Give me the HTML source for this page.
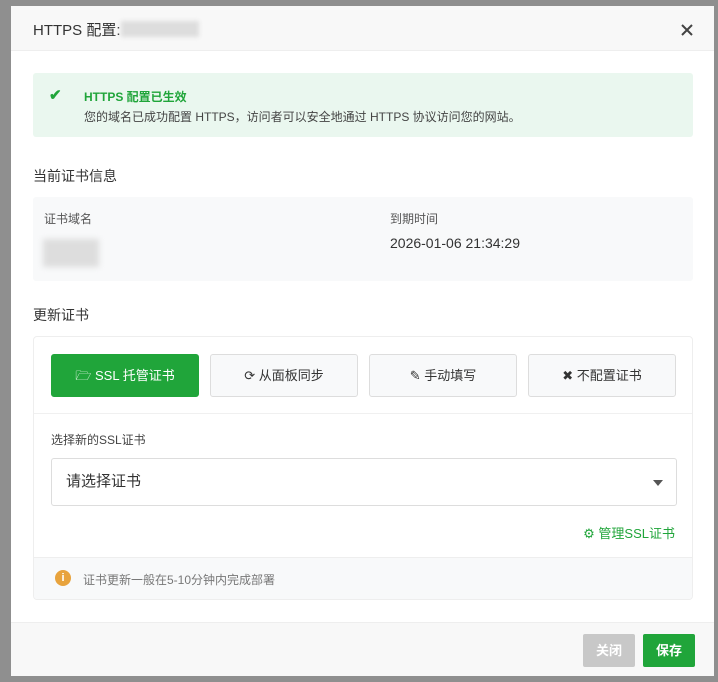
<!DOCTYPE html>
<html><head><meta charset="utf-8"><style>
*{box-sizing:border-box;margin:0;padding:0}
body{width:718px;height:682px;background:#8f8f8f;font-family:"Liberation Sans","Noto Sans CJK SC",sans-serif;position:relative;overflow:hidden;color:#333}
.modal{position:absolute;left:11px;top:6px;width:703px;height:670px;background:#fff;overflow:hidden}
.hd{height:45px;background:#f8f8f8;border-bottom:1px solid #eee;position:relative}
.hd .t{position:absolute;left:22px;top:13px;font-size:15px;color:#333}
.blur{display:inline-block;width:78px;height:16px;background:#ddd;vertical-align:-2px;filter:blur(2px)}
.hd svg{position:absolute;left:670px;top:18px}
.ok{position:absolute;left:22px;top:67px;width:660px;height:64px;background:#eaf7ef;border-radius:3px}
.ok .c{position:absolute;left:16px;top:13px;color:#20a53a;font-size:15px;font-weight:bold}
.ok .a{position:absolute;left:51px;top:15px;color:#20a53a;font-size:12px;font-weight:bold}
.ok .b{position:absolute;left:51px;top:35px;font-size:12px;color:#444}
.h2{position:absolute;left:22px;font-size:14px;color:#333}
.info{position:absolute;left:22px;top:191px;width:660px;height:84px;background:#f8f9fa;border-radius:3px}
.lbl{position:absolute;font-size:12px;color:#555}
.card{position:absolute;left:22px;top:330px;width:660px;height:264px;border:1px solid #eee;border-radius:4px;overflow:hidden}
.btn{position:absolute;top:17px;width:148px;height:43px;border:1px solid #ddd;background:#f8f9fa;border-radius:3px;font-size:13px;text-align:center;line-height:41px;color:#333}
.btn.g{background:#20a53a;border-color:#20a53a;color:#fff}
.sel{position:absolute;left:17px;top:121px;width:626px;height:48px;border:1px solid #ddd;border-radius:3px;font-size:15px;line-height:46px;padding-left:14px;color:#333}
.tri{position:absolute;right:13px;top:21px;border-left:5px solid transparent;border-right:5px solid transparent;border-top:6px solid #555}
.foot{position:absolute;left:0;bottom:0;width:100%;height:42px;background:#f8f9fa;border-top:1px solid #eee}
.mf{position:absolute;left:0;top:616px;width:703px;height:54px;background:#f8f8f8;border-top:1px solid #eee}
.b2{position:absolute;top:11px;height:33px;color:#fff;font-size:13px;font-weight:bold;text-align:center;line-height:33px;border-radius:2px}
</style></head><body>
<div class="modal">
<div class="hd"><div class="t">HTTPS 配置:<span class="blur"></span></div><svg width="12" height="12" viewBox="0 0 12 12"><path d="M1 1L11 11M11 1L1 11" stroke="#444" stroke-width="2"/></svg></div>
<div class="ok"><div class="c">✔</div><div class="a">HTTPS 配置已生效</div><div class="b">您的域名已成功配置 HTTPS，访问者可以安全地通过 HTTPS 协议访问您的网站。</div></div>
<div class="h2" style="top:160px">当前证书信息</div>
<div class="info">
<div class="lbl" style="left:11px;top:13px">证书域名</div>
<div style="position:absolute;left:10px;top:42px;width:56px;height:28px;background:#ddd;filter:blur(3px)"></div>
<div class="lbl" style="left:357px;top:13px">到期时间</div>
<div style="position:absolute;left:357px;top:38px;font-size:14px;color:#333">2026-01-06 21:34:29</div>
</div>
<div class="h2" style="top:299px">更新证书</div>
<div class="card">
<div class="btn g" style="left:17px">🗁 SSL 托管证书</div>
<div class="btn" style="left:176px">⟳ 从面板同步</div>
<div class="btn" style="left:335px">✎ 手动填写</div>
<div class="btn" style="left:494px">✖ 不配置证书</div>
<div style="position:absolute;left:0;top:76px;width:100%;border-top:1px solid #f0f0f0"></div>
<div class="lbl" style="left:17px;top:94px;color:#444">选择新的SSL证书</div>
<div class="sel">请选择证书<div class="tri"></div></div>
<div style="position:absolute;right:17px;top:186px;color:#20a53a;font-size:13px">⚙ 管理SSL证书</div>
<div class="foot"><div style="position:absolute;left:21px;top:12px;width:16px;height:16px;border-radius:50%;background:#e8a33d;color:#fff;font-size:11px;text-align:center;line-height:16px;font-weight:bold">i</div><div class="lbl" style="left:49px;top:13px;color:#777">证书更新一般在5-10分钟内完成部署</div></div>
</div>
<div class="mf">
<div class="b2" style="left:572px;width:52px;background:#c8c8c8">关闭</div>
<div class="b2" style="left:632px;width:52px;background:#20a53a">保存</div>
</div>
</div>
</body></html>
